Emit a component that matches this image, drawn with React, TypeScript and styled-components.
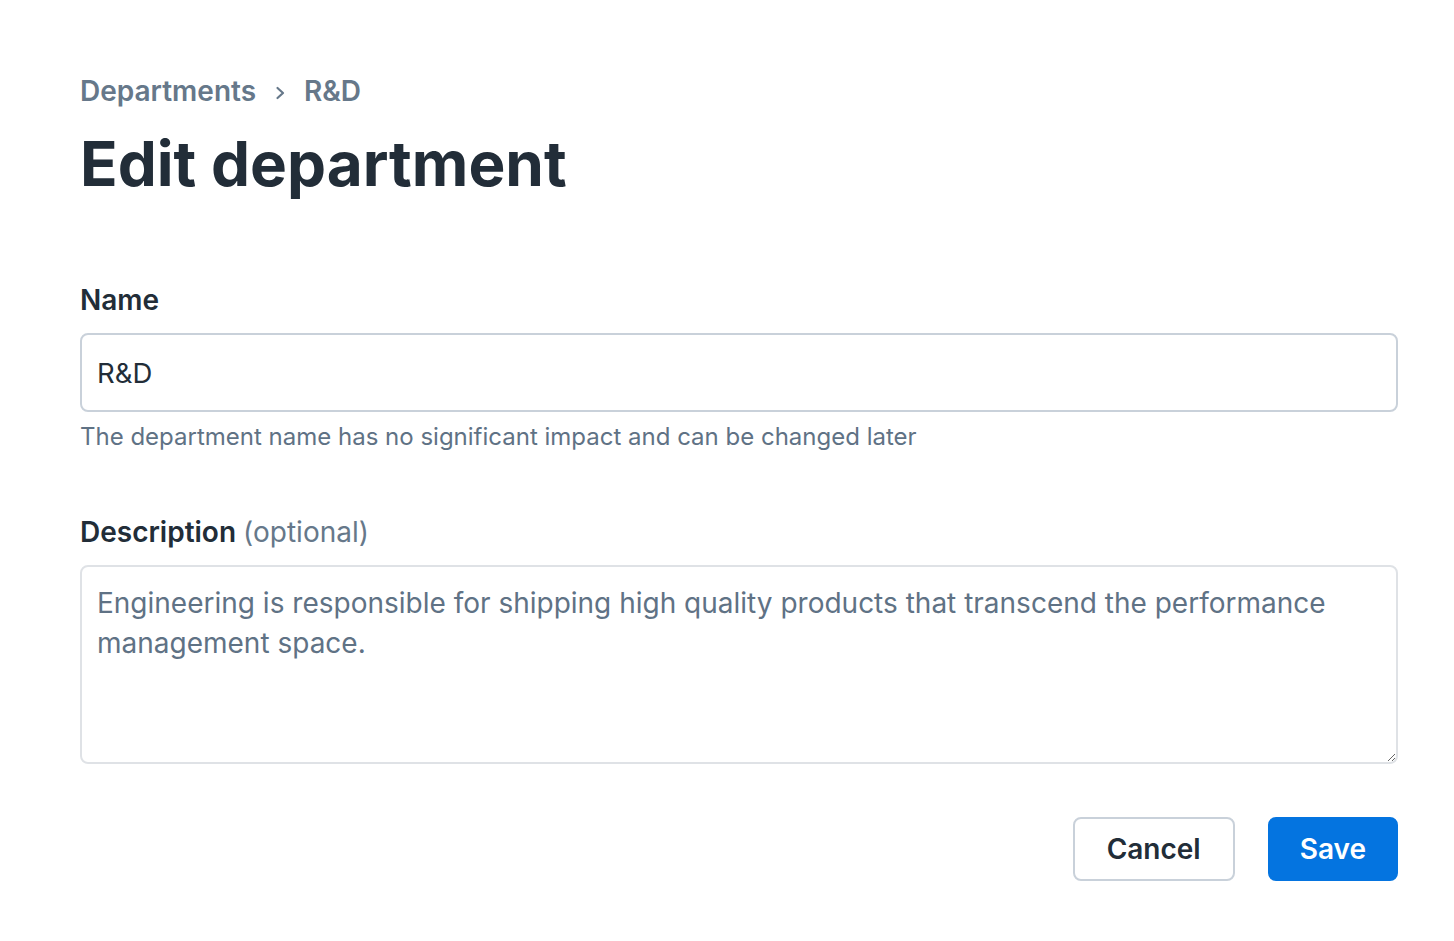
import React, { useState } from 'react'
import styled, { createGlobalStyle } from 'styled-components'

const GlobalStyle = createGlobalStyle`
  html, body {
    margin: 0;
    padding: 0;
    background: #ffffff;
  }
  body {
    font-family: Inter, 'Noto Sans', 'Liberation Sans', sans-serif;
    color: #222d38;
  }
`

const Page = styled.div`
  padding: 72px 56px 60px 80px;
`

const Breadcrumb = styled.nav`
  display: flex;
  align-items: center;
  gap: 16px;
  font-size: 28px;
  line-height: 39px;
  font-weight: 600;
  color: #66788a;
`

const Crumb = styled.a`
  color: inherit;
  text-decoration: none;
`

const Chevron = styled.svg`
  width: 16px;
  height: 18px;
  margin-top: 3px;
`

const Title = styled.h1`
  margin: 14px 0 0;
  font-size: 62px;
  line-height: 78px;
  font-weight: 700;
  color: #222d38;
`

const Field = styled.div<{ $top: number }>`
  display: flex;
  flex-direction: column;
  margin-top: ${p => p.$top}px;
`

const Label = styled.label`
  font-size: 28px;
  line-height: 39px;
  font-weight: 600;
  color: #222d38;
  margin-bottom: 13px;
`

const Optional = styled.span`
  font-weight: 400;
  color: #66788a;
`

const TextInput = styled.input`
  box-sizing: border-box;
  height: 79px;
  width: 100%;
  padding: 0 15px;
  border: 2px solid #c9d1da;
  border-radius: 8px;
  font-family: inherit;
  font-size: 27.5px;
  color: #222d38;
  outline: none;
`

const Help = styled.div`
  margin-top: 8px;
  font-size: 24px;
  line-height: 34px;
  color: #5f7285;
`

const TextArea = styled.textarea`
  box-sizing: border-box;
  height: 199px;
  width: 100%;
  padding: 16px 15px;
  border: 2px solid #dfe2e6;
  border-radius: 8px;
  font-family: inherit;
  font-size: 28px;
  line-height: 40px;
  color: #5f7285;
  resize: vertical;
  outline: none;
`

const Actions = styled.div`
  display: flex;
  justify-content: flex-end;
  gap: 33px;
  margin-top: 53px;
`

const Button = styled.button<{ $primary?: boolean }>`
  box-sizing: border-box;
  height: 64px;
  padding: 0 ${p => (p.$primary ? 30 : 32)}px;
  border-radius: 8px;
  border: 2px solid ${p => (p.$primary ? '#0474e0' : '#c9d1da')};
  background: ${p => (p.$primary ? '#0474e0' : '#ffffff')};
  color: ${p => (p.$primary ? '#ffffff' : '#222d38')};
  font-family: inherit;
  font-size: 28px;
  font-weight: 600;
  cursor: pointer;
`

const App = () => {
  const [name, setName] = useState('R&D')
  const [description, setDescription] = useState(
    'Engineering is responsible for shipping high quality products that transcend the performance management space.'
  )

  return (
    <>
      <GlobalStyle />
      <Page>
        <Breadcrumb>
          <Crumb href='#'>Departments</Crumb>
          <Chevron viewBox='0 0 16 18' fill='none'>
            <path
              d='M5.5 4L11 9L5.5 14'
              stroke='#66788a'
              strokeWidth='2.2'
              strokeLinecap='round'
              strokeLinejoin='round'
            />
          </Chevron>
          <Crumb href='#'>R&amp;D</Crumb>
        </Breadcrumb>
        <Title>Edit department</Title>

        <Field $top={78}>
          <Label htmlFor='name'>Name</Label>
          <TextInput
            id='name'
            value={name}
            onChange={e => setName(e.target.value)}
          />
          <Help>The department name has no significant impact and can be changed later</Help>
        </Field>

        <Field $top={59}>
          <Label htmlFor='description'>
            Description <Optional>(optional)</Optional>
          </Label>
          <TextArea
            id='description'
            value={description}
            onChange={e => setDescription(e.target.value)}
          />
        </Field>

        <Actions>
          <Button type='button'>Cancel</Button>
          <Button type='button' $primary>
            Save
          </Button>
        </Actions>
      </Page>
    </>
  )
}

export default App
